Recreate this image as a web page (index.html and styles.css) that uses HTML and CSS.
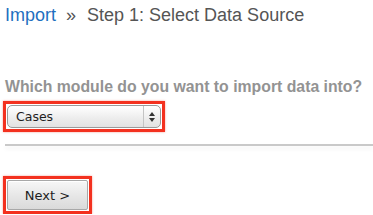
FILE: index.html
```html
<!DOCTYPE html>
<html>
<head>
<meta charset="utf-8">
<link rel="stylesheet" href="styles.css">
</head>
<body>
<div class="page">
  <h2 class="crumbs"><a class="crumb-link" href="#">Import</a><span class="sep">»</span><span class="step">Step 1: Select Data Source</span></h2>
  <p class="question">Which module do you want to import data into?</p>
  <div class="highlight select-hl">
    <div class="select">
      <span class="select-value">Cases</span>
      <span class="select-arrows">
        <svg width="8" height="12" viewBox="0 0 8 12"><path d="M4 1 L7 5 L1 5 Z" fill="#333"/><path d="M4 11 L7 7 L1 7 Z" fill="#333"/></svg>
      </span>
    </div>
  </div>
  <div class="rule"></div>
  <div class="highlight btn-hl">
    <button class="btn">Next &gt;</button>
  </div>
</div>
</body>
</html>
```

FILE: styles.css
```css
html, body {
  margin: 0;
  padding: 0;
  background: #fff;
}
.page {
  padding: 0 0 0 5px;
  font-family: "Liberation Sans", Arial, sans-serif;
}
.crumbs {
  margin: 0;
  padding-top: 4px;
  font-size: 18px;
  font-weight: normal;
  line-height: 22px;
  color: #555;
  display: flex;
  align-items: baseline;
}
.crumb-link {
  color: #1f6fbf;
  text-decoration: none;
}
.sep {
  padding: 0 11px 0 10px;
  color: #555;
}
.question {
  margin: 51px 0 0 0;
  font-size: 15.8px;
  font-weight: bold;
  line-height: 19px;
  color: #939393;
}
.highlight {
  display: inline-flex;
  border: 3px solid #f3311f;
  padding: 1px;
  margin-left: -2px;
  box-shadow: 0 0 2px rgba(240, 60, 40, 0.5);
}
.select-hl {
  margin-top: 5px;
}
.select {
  width: 152px;
  height: 21px;
  border: 1px solid #9a9a9a;
  border-radius: 5px;
  background: linear-gradient(#ffffff, #ececec 60%, #e2e2e2);
  display: flex;
  align-items: center;
  box-sizing: content-box;
  font-family: "DejaVu Sans", sans-serif;
  font-size: 12.5px;
  color: #1e1e1e;
}
.select-value {
  flex: 1;
  padding-left: 8px;
}
.select-arrows {
  width: 16px;
  height: 21px;
  border-left: 1px solid #c4c4c4;
  display: flex;
  align-items: center;
  justify-content: center;
}
.rule {
  margin-top: 12px;
  height: 2px;
  background: #c9c9c9;
  box-shadow: 0 3px 4px #f0f0f0;
}
.btn-hl {
  display: flex;
  width: fit-content;
  margin-top: 30px;
}
.btn {
  width: 81px;
  height: 30px;
  border: 1px solid #a8a8a8;
  border-radius: 2px;
  background: linear-gradient(#f7f7f7, #e6e6e6 55%, #dadada);
  font-family: "DejaVu Sans", sans-serif;
  font-size: 13px;
  color: #1e1e1e;
  padding: 0;
  box-shadow: inset 0 1px 0 #fff;
}
```
